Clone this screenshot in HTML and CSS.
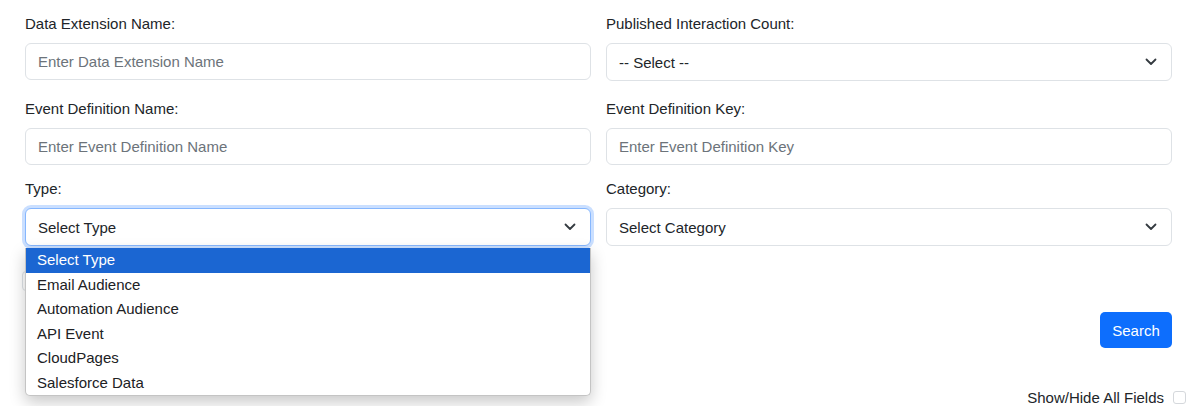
FILE: index.html
```html
<!DOCTYPE html>
<html lang="en">
<head>
  <meta charset="UTF-8">
  <meta name="viewport" content="width=device-width, initial-scale=1.0">
  <title>Journey Search</title>
  <link rel="stylesheet" href="styles.css">
</head>
<body>
  <div class="search-form">
    <div class="fields">
      <div class="field">
        <label class="field-label">Data Extension Name:</label>
        <div class="form-control placeholder">Enter Data Extension Name</div>
      </div>
      <div class="field">
        <label class="field-label">Published Interaction Count:</label>
        <div class="form-select">
          <span>-- Select --</span>
          <svg class="chevron" width="12" height="8" viewBox="0 0 12 8"><path d="M1.5 1.5 6 6l4.5-4.5" fill="none" stroke="#343a40" stroke-width="1.8" stroke-linecap="round" stroke-linejoin="round"/></svg>
        </div>
      </div>
      <div class="field row-2">
        <label class="field-label">Event Definition Name:</label>
        <div class="form-control placeholder">Enter Event Definition Name</div>
      </div>
      <div class="field row-2">
        <label class="field-label">Event Definition Key:</label>
        <div class="form-control placeholder">Enter Event Definition Key</div>
      </div>
      <div class="field row-3">
        <label class="field-label">Type:</label>
        <div class="select-wrap">
          <div class="form-select focused">
            <span>Select Type</span>
            <svg class="chevron" width="12" height="8" viewBox="0 0 12 8"><path d="M1.5 1.5 6 6l4.5-4.5" fill="none" stroke="#343a40" stroke-width="1.8" stroke-linecap="round" stroke-linejoin="round"/></svg>
          </div>
          <ul class="options">
            <li class="active">Select Type</li>
            <li>Email Audience</li>
            <li>Automation Audience</li>
            <li>API Event</li>
            <li>CloudPages</li>
            <li>Salesforce Data</li>
          </ul>
        </div>
      </div>
      <div class="field row-3">
        <label class="field-label">Category:</label>
        <div class="form-select">
          <span>Select Category</span>
          <svg class="chevron" width="12" height="8" viewBox="0 0 12 8"><path d="M1.5 1.5 6 6l4.5-4.5" fill="none" stroke="#343a40" stroke-width="1.8" stroke-linecap="round" stroke-linejoin="round"/></svg>
        </div>
      </div>
    </div>

    <div class="extra-row">
      <div class="date-box"></div>
    </div>

    <div class="actions">
      <button class="btn-search">Search</button>
    </div>

    <div class="toggle-row">
      <span>Show/Hide All Fields</span>
      <span class="checkbox"></span>
    </div>
  </div>
</body>
</html>
```

FILE: styles.css
```css
* {
  margin: 0;
  padding: 0;
  box-sizing: border-box;
}

body {
  font-family: "Liberation Sans", Arial, sans-serif;
  font-size: 15px;
  color: #212529;
  background: #ffffff;
}

.search-form {
  padding: 15px 28px 0 25px;
}

.fields {
  display: grid;
  grid-template-columns: 1fr 1fr;
  column-gap: 15px;
}

.field.row-2 {
  margin-top: 19px;
}

.field.row-3 {
  margin-top: 15px;
}

.field-label {
  display: block;
  line-height: 18px;
  margin-bottom: 10px;
}

.form-control,
.form-select {
  height: 37px;
  border: 1px solid #dee2e6;
  border-radius: 6px;
  padding: 0 12px;
  display: flex;
  align-items: center;
  background: #fff;
}

.placeholder {
  color: #6c737a;
}

.form-select {
  height: 38px;
  justify-content: space-between;
  padding-right: 14px;
}

.chevron {
  display: block;
}

.form-select.focused {
  border-color: #86b7fe;
  box-shadow: 0 0 0 3px rgba(13, 110, 253, 0.22);
}

.select-wrap {
  position: relative;
}

.options {
  list-style: none;
  position: absolute;
  top: 40px;
  left: 0;
  right: 0;
  background: #fff;
  border: 1px solid #c4c4c4;
  border-top: none;
  border-radius: 0 0 5px 5px;
  box-shadow: 0 6px 16px rgba(0, 0, 0, 0.22);
  z-index: 5;
}

.options li {
  height: 24.5px;
  line-height: 24.5px;
  padding-left: 11px;
  color: #202124;
}

.options li.active {
  background: #1b66d2;
  color: #fff;
}

.extra-row {
  margin-top: 25px;
  margin-left: -3px;
}

.date-box {
  width: 40px;
  height: 20px;
  border: 1px solid #dee2e6;
  border-radius: 4px;
}

.actions {
  display: flex;
  justify-content: flex-end;
  margin-top: 21px;
}

.btn-search {
  font-family: inherit;
  font-size: 15px;
  color: #fff;
  background: #0d6efd;
  border: none;
  border-radius: 5px;
  width: 72px;
  height: 36px;
}

.toggle-row {
  display: flex;
  justify-content: flex-end;
  align-items: center;
  gap: 9px;
  margin-top: 41px;
  margin-right: -14px;
}

.checkbox {
  width: 13px;
  height: 13px;
  border: 1px solid #d5d8dc;
  border-radius: 3px;
}
```
